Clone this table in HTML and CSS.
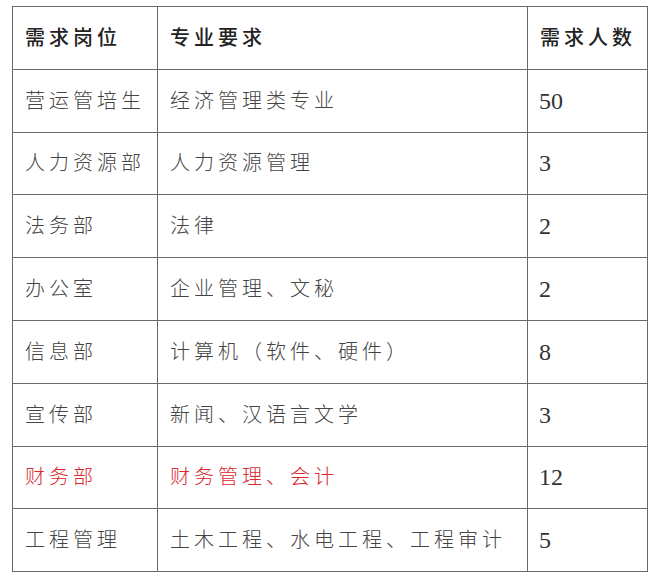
FILE: index.html
```html
<!DOCTYPE html>
<html>
<head>
<meta charset="utf-8">
<link rel="stylesheet" href="styles.css">
</head>
<body>
<table class="jobs">
  <colgroup>
    <col class="c1"><col class="c2"><col class="c3">
  </colgroup>
  <tr class="head"><td>需求岗位</td><td>专业要求</td><td>需求人数</td></tr>
  <tr><td>营运管培生</td><td>经济管理类专业</td><td class="num">50</td></tr>
  <tr><td>人力资源部</td><td>人力资源管理</td><td class="num">3</td></tr>
  <tr><td>法务部</td><td>法律</td><td class="num">2</td></tr>
  <tr><td>办公室</td><td>企业管理、文秘</td><td class="num">2</td></tr>
  <tr><td>信息部</td><td>计算机（软件、硬件）</td><td class="num">8</td></tr>
  <tr><td>宣传部</td><td>新闻、汉语言文学</td><td class="num">3</td></tr>
  <tr class="red"><td>财务部</td><td>财务管理、会计</td><td class="num">12</td></tr>
  <tr><td>工程管理</td><td>土木工程、水电工程、工程审计</td><td class="num">5</td></tr>
</table>
</body>
</html>
```
FILE: styles.css
```css
html, body {
  margin: 0;
  padding: 0;
  background: #ffffff;
}
body {
  padding: 6px 0 0 12px;
}
.jobs {
  border-collapse: collapse;
  table-layout: fixed;
  width: 635px;
  font-family: "Liberation Serif", "Noto Sans CJK SC", serif;
  color: #444444;
}
.c1 { width: 145px; }
.c2 { width: 370px; }
.c3 { width: 120px; }
.jobs td {
  border: 1px solid #6a6a6a;
  height: 61.8px;
  padding: 0 0 0 12px;
  font-size: 20px;
  font-weight: 300;
  letter-spacing: 4px;
  white-space: nowrap;
  vertical-align: middle;
  line-height: 24px;
}
.jobs td.num {
  font-size: 24px;
  font-weight: 400;
  letter-spacing: 0;
  color: #333333;
  padding-left: 11px;
}
.head td {
  color: #222222;
  font-weight: 500;
}
.red td {
  color: #d9282e;
}
.red td.num {
  color: #333333;
}
```
